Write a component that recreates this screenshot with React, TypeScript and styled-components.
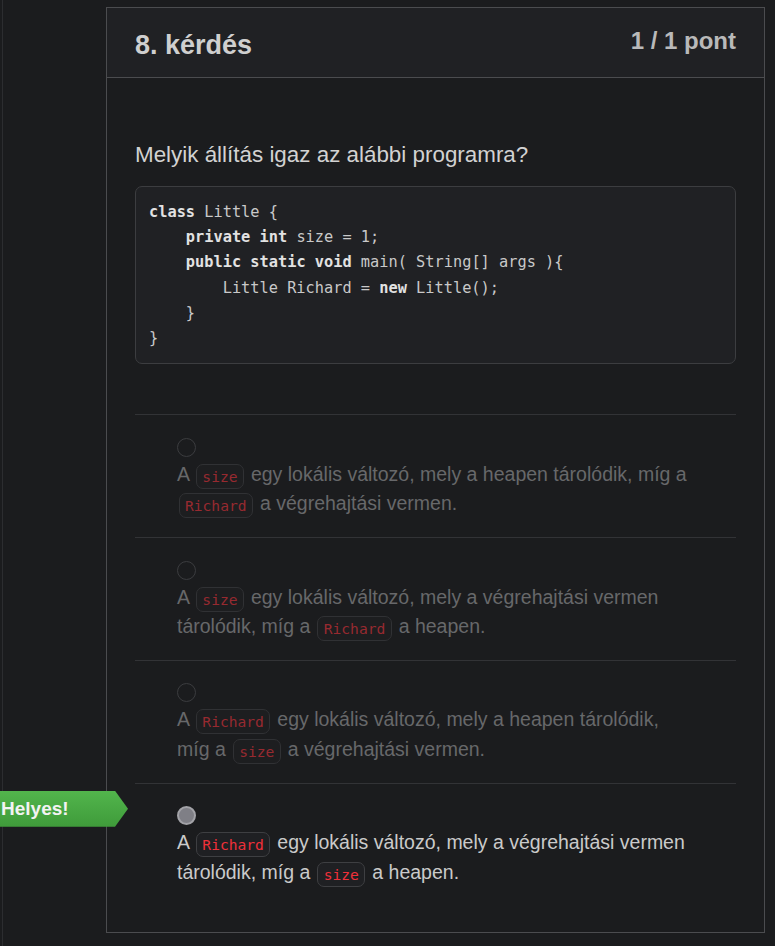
import React from "react";
import styled, { createGlobalStyle } from "styled-components";

const Global = createGlobalStyle`
  html, body { margin: 0; padding: 0; background: #1b1c1e; }
  body { font-family: "Liberation Sans", Arial, sans-serif; }
`;

const Page = styled.div`
  min-height: 946px;
  margin-left: 2px;
  border-left: 1px solid #2c2d30;
  padding: 7px 10px 14px 103px;
  box-sizing: border-box;
`;

const Panel = styled.section`
  width: 659px;
  border: 1px solid #4b4c4f;
  box-sizing: border-box;
  background: #1b1c1e;
`;

const Header = styled.header`
  height: 70px;
  box-sizing: border-box;
  background: #202124;
  border-bottom: 1px solid #4b4c4f;
  display: flex;
  justify-content: space-between;
  align-items: flex-start;
  padding: 0 28px;
`;

const Title = styled.h2`
  margin: 21px 0 0;
  font-size: 27px;
  line-height: 32px;
  font-weight: 700;
  color: #cfcfcf;
`;

const Points = styled.div`
  margin-top: 18px;
  font-size: 24px;
  line-height: 29px;
  font-weight: 700;
  color: #b9b9b9;
`;

const Body = styled.div`
  padding: 60px 28px 27px;
`;

const Question = styled.p`
  margin: 0 0 14px;
  font-size: 22.4px;
  line-height: 34px;
  color: #d2d2d2;
`;

const Code = styled.pre`
  margin: 0 0 50px;
  padding: 13px 13px 12px;
  background: #202124;
  border: 1px solid #3c3d40;
  border-radius: 7px;
  font-family: "DejaVu Sans Mono", "Liberation Mono", monospace;
  font-size: 15.3px;
  line-height: 25.2px;
  color: #c9c9c9;
  white-space: pre;
`;

const Kw = styled.b`
  font-weight: 700;
  color: #e2e2e2;
`;

const Answers = styled.div`
  display: flex;
  flex-direction: column;
`;

const Answer = styled.div<{ $active?: boolean }>`
  position: relative;
  border-top: 1px solid #323336;
  padding: 22.5px 42px 18.5px;
  color: ${(p) => (p.$active ? "#cacaca" : "#67686a")};
  font-size: 19.5px;
  line-height: 29.4px;
`;

const Radio = styled.span<{ $checked?: boolean }>`
  display: block;
  width: 19px;
  height: 19px;
  box-sizing: border-box;
  border-radius: 50%;
  margin-bottom: 3px;
  border: ${(p) => (p.$checked ? "2px solid #a3a3a8" : "1.5px solid #3b3c3f")};
  background: ${(p) => (p.$checked ? "#7f7f86" : "transparent")};
`;

const Tag = styled.code<{ $active?: boolean }>`
  display: inline-block;
  margin: 0 1.5px;
  font-family: "DejaVu Sans Mono", "Liberation Mono", monospace;
  font-size: 14.6px;
  line-height: 23px;
  padding: 0 5.5px;
  border: 1px solid ${(p) => (p.$active ? "#3e3f42" : "#303134")};
  border-radius: 7px;
  background: ${(p) => (p.$active ? "#1f2023" : "#1d1e20")};
  color: ${(p) => (p.$active ? "#f0303a" : "#972a30")};
  vertical-align: -1px;
`;

const Flag = styled.div`
  position: absolute;
  left: -135px;
  top: 7px;
  width: 128px;
  height: 36px;
  box-sizing: border-box;
  padding-left: 1px;
  background: linear-gradient(#52b54c, #3f9b3a);
  clip-path: polygon(0 0, 115px 0, 128px 18px, 115px 36px, 0 36px);
  color: #f3f3f3;
  font-size: 19px;
  font-weight: 700;
  line-height: 36px;
`;

const answers = [
  { a: "size", b: "Richard", mid: " egy lokális változó, mely a heapen tárolódik, míg a ", end: " a végrehajtási vermen." },
  { a: "size", b: "Richard", mid: " egy lokális változó, mely a végrehajtási vermen tárolódik, míg a ", end: " a heapen." },
  { a: "Richard", b: "size", mid: " egy lokális változó, mely a heapen tárolódik, míg a ", end: " a végrehajtási vermen." },
  { a: "Richard", b: "size", mid: " egy lokális változó, mely a végrehajtási vermen tárolódik, míg a ", end: " a heapen.", correct: true },
];

export default function App() {
  return (
    <>
      <Global />
      <Page>
        <Panel>
          <Header>
            <Title>8. kérdés</Title>
            <Points>1 / 1 pont</Points>
          </Header>
          <Body>
            <Question>Melyik állítás igaz az alábbi programra?</Question>
            <Code>
              <Kw>class</Kw> Little {"{\n"}
              {"    "}<Kw>private</Kw> <Kw>int</Kw> size = 1;{"\n"}
              {"    "}<Kw>public</Kw> <Kw>static</Kw> <Kw>void</Kw> main( String[] args ){"{\n"}
              {"        "}Little Richard = <Kw>new</Kw> Little();{"\n"}
              {"    }\n"}
              {"}"}
            </Code>
            <Answers>
              {answers.map((x, i) => (
                <Answer key={i} $active={x.correct}>
                  {x.correct && <Flag>Helyes!</Flag>}
                  <Radio $checked={x.correct} />
                  A <Tag $active={x.correct}>{x.a}</Tag>
                  {x.mid}
                  <Tag $active={x.correct}>{x.b}</Tag>
                  {x.end}
                </Answer>
              ))}
            </Answers>
          </Body>
        </Panel>
      </Page>
    </>
  );
}
